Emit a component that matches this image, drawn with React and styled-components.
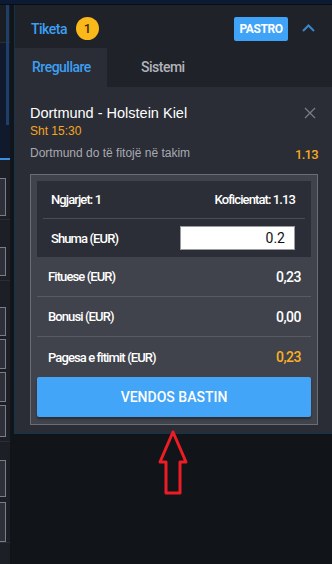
import React from "react";
import styled, { createGlobalStyle } from "styled-components";

const Global = createGlobalStyle`
  html, body {
    margin: 0;
    padding: 0;
    background: #111418;
    overflow: hidden;
  }
  * { box-sizing: border-box; }
`;

const Page = styled.div`
  width: 332px;
  height: 564px;
  display: flex;
  flex-direction: column;
  background: #111418;
  font-family: Roboto, "Liberation Sans", sans-serif;
`;

const TopStrip = styled.div`
  height: 5px;
  flex-shrink: 0;
  background: #0c1a34;
  border-bottom: 1px solid #0a0d12;
`;

const Body = styled.div`
  flex: 1;
  display: flex;
  gap: 4px;
`;

const Sidebar = styled.div`
  width: 10px;
  display: flex;
  flex-direction: column;
  background: #1c1f25;
`;

const SideHead = styled.div`
  height: 38px;
  background: #1a1d23;
  border-bottom: 1px solid #2a2d34;
`;

const SideTexture = styled.div`
  height: 117px;
  display: flex;
  justify-content: flex-end;
  padding: 0 1px 0 0;
  background: #101a2c;
  border-bottom: 2px solid #3b8fe0;
`;

const Scroll = styled.div`
  width: 3px;
  height: 120px;
  margin-top: -38px;
  background: #1d3f68;
`;

const SideGroup = styled.div`
  display: flex;
  flex-direction: column;
  gap: ${p => p.$gap || 2}px;
  padding: ${p => p.$pad || "8px 0"};
  border-bottom: 1px solid #2a2d34;
`;

const Stub = styled.div`
  width: 6px;
  height: ${p => p.$h}px;
  background: #2d3038;
  border: 1px solid #7a7d84;
  border-left: none;
`;

const Column = styled.div`
  flex: 1;
  display: flex;
  flex-direction: column;
  align-items: center;
`;

const Panel = styled.section`
  width: 100%;
  height: 429px;
  display: flex;
  flex-direction: column;
  border: 1px solid #143449;
  border-top: none;
  border-right: none;
  background: #2a2d36;
`;

const Header = styled.header`
  height: 43px;
  display: flex;
  align-items: center;
  padding: 5px 17px 0 16px;
  background: #1f2229;
`;

const HeadTitle = styled.span`
  color: #3d9ff2;
  font-size: 14px;
  font-weight: 500;
  letter-spacing: -0.5px;
`;

const Badge = styled.span`
  width: 23px;
  height: 23px;
  margin-left: 9px;
  border-radius: 50%;
  background: #fbb81b;
  color: #3a2a00;
  font-size: 13px;
  font-weight: 500;
  display: flex;
  align-items: center;
  justify-content: center;
`;

const ClearButton = styled.button`
  margin-left: auto;
  width: 54px;
  height: 24px;
  padding: 0;
  border: none;
  border-radius: 2px;
  background: #3fa3f7;
  color: #fff;
  font-family: inherit;
  font-size: 12px;
  font-weight: 700;
  letter-spacing: -0.4px;
`;

const Chevron = styled.svg`
  margin-left: 14px;
  width: 13px;
  height: 13px;
`;

const Tabs = styled.nav`
  height: 40px;
  display: flex;
  background: #1f2229;
`;

const Tab = styled.div`
  width: ${p => (p.$active ? 92 : 110)}px;
  display: flex;
  align-items: center;
  padding-left: ${p => (p.$active ? 17 : 34)}px;
  background: ${p => (p.$active ? "#2a2d36" : "transparent")};
  color: ${p => (p.$active ? "#3d9ff2" : "#b2b4b9")};
  font-size: 14px;
  font-weight: 500;
  letter-spacing: -0.5px;
`;

const Content = styled.div`
  display: flex;
  flex-direction: column;
  padding: 18px 14px 8px 15px;
  font-family: "Liberation Sans", Arial, sans-serif;
`;

const EventRow = styled.div`
  display: flex;
  align-items: flex-start;
  justify-content: space-between;
`;

const EventTitle = styled.div`
  color: #fff;
  font-size: 14.5px;
  line-height: 17px;
`;

const EventTime = styled.div`
  margin-top: 2px;
  color: #f5a623;
  font-size: 12px;
  line-height: 15px;
`;

const Close = styled.svg`
  margin: 2px 2px 0 0;
  width: 12px;
  height: 12px;
`;

const PickRow = styled.div`
  display: flex;
  justify-content: space-between;
  align-items: flex-end;
  margin-top: 7px;
  color: #a8aab0;
  font-size: 12px;
`;

const Odd = styled.span`
  color: #f8a91f;
  font-family: Roboto, sans-serif;
  font-size: 13px;
  font-weight: 500;
  letter-spacing: -0.7px;
  margin-bottom: -2px;
`;

const Slip = styled.div`
  margin-top: 14px;
  padding: 6px 6px 7px;
  border: 1px solid #6a6d74;
  background: #40434c;
  font-family: Roboto, sans-serif;
`;

const Summary = styled.div`
  display: flex;
  flex-direction: column;
  padding: 0 6px;
  background: #2b2e36;
`;

const SumRow = styled.div`
  height: ${p => p.$h}px;
  display: flex;
  align-items: center;
  justify-content: space-between;
  padding: 0 10px 0 8px;
  color: #fff;
  font-size: 13px;
  font-weight: 500;
  letter-spacing: -0.9px;
  border-bottom: ${p => (p.$line ? "1px solid #4a4d55" : "none")};
`;

const Amount = styled.div`
  width: 115px;
  height: 24px;
  display: flex;
  align-items: center;
  justify-content: flex-end;
  padding-right: 9px;
  background: #fff;
  border: 1px solid #9a9ca0;
  color: #111;
  font-size: 14px;
  font-weight: 400;
  letter-spacing: 0;
`;

const Line = styled.div`
  height: 40px;
  display: flex;
  align-items: center;
  justify-content: space-between;
  padding: 0 10px 0 11px;
  color: #fff;
  font-size: 13px;
  font-weight: 500;
  letter-spacing: -0.9px;
  border-bottom: ${p => (p.$line ? "1px solid #585b62" : "none")};
`;

const Value = styled.span`
  color: ${p => (p.$accent ? "#fbb023" : "#fff")};
  font-size: 14px;
  font-weight: 500;
  letter-spacing: -0.5px;
`;

const PlaceButton = styled.button`
  width: 100%;
  height: 40px;
  border: none;
  border-radius: 2px;
  background: #42a5f7;
  box-shadow: 0 2px 2px rgba(0, 0, 0, 0.35);
  color: #fff;
  font-family: Roboto, sans-serif;
  font-size: 14px;
  font-weight: 500;
  letter-spacing: 0;
`;

const Arrow = styled.svg`
  margin-top: -4px;
  width: 32px;
  height: 66px;
`;

export default function App() {
  return (
    <Page>
      <Global />
      <TopStrip />
      <Body>
        <Sidebar>
          <SideHead />
          <SideTexture>
            <Scroll />
          </SideTexture>
          <SideGroup $pad="18px 0 3px">
            <Stub $h={38} />
          </SideGroup>
          <SideGroup $pad="27px 0 4px">
            <Stub $h={29} />
          </SideGroup>
          <SideGroup $pad="26px 0 4px" $gap={3}>
            <Stub $h={29} />
            <Stub $h={30} />
            <Stub $h={30} />
            <Stub $h={32} />
          </SideGroup>
          <SideGroup $pad="18px 0 0" $gap={5}>
            <Stub $h={37} />
            <Stub $h={40} />
          </SideGroup>
        </Sidebar>
        <Column>
          <Panel>
            <Header>
              <HeadTitle>Tiketa</HeadTitle>
              <Badge>1</Badge>
              <ClearButton>PASTRO</ClearButton>
              <Chevron viewBox="0 0 13 13">
                <path d="M1 9 L6.5 3.5 L12 9" fill="none" stroke="#3a86c8" strokeWidth="2" />
              </Chevron>
            </Header>
            <Tabs>
              <Tab $active>Rregullare</Tab>
              <Tab>Sistemi</Tab>
            </Tabs>
            <Content>
              <EventRow>
                <div>
                  <EventTitle>Dortmund - Holstein Kiel</EventTitle>
                  <EventTime>Sht 15:30</EventTime>
                </div>
                <Close viewBox="0 0 12 12">
                  <path d="M1 1 L11 11 M11 1 L1 11" stroke="#7b7e85" strokeWidth="1.2" />
                </Close>
              </EventRow>
              <PickRow>
                <span>Dortmund do të fitojë në takim</span>
                <Odd>1.13</Odd>
              </PickRow>
              <Slip>
                <Summary>
                  <SumRow $h={38} $line>
                    <span>Ngjarjet: 1</span>
                    <span>Koficientat: 1.13</span>
                  </SumRow>
                  <SumRow $h={38}>
                    <span>Shuma (EUR)</span>
                    <Amount>0.2</Amount>
                  </SumRow>
                </Summary>
                <Line $line>
                  <span>Fituese (EUR)</span>
                  <Value>0,23</Value>
                </Line>
                <Line $line>
                  <span>Bonusi (EUR)</span>
                  <Value>0,00</Value>
                </Line>
                <Line>
                  <span>Pagesa e fitimit (EUR)</span>
                  <Value $accent>0,23</Value>
                </Line>
                <PlaceButton>VENDOS BASTIN</PlaceButton>
              </Slip>
            </Content>
          </Panel>
          <Arrow viewBox="0 0 32 66">
            <path
              d="M16 2 L29 32 L23 32 L23 63 L9 63 L9 32 L3 32 Z"
              fill="none"
              stroke="#ee1c24"
              strokeWidth="3"
              strokeLinejoin="round"
            />
          </Arrow>
        </Column>
      </Body>
    </Page>
  );
}
